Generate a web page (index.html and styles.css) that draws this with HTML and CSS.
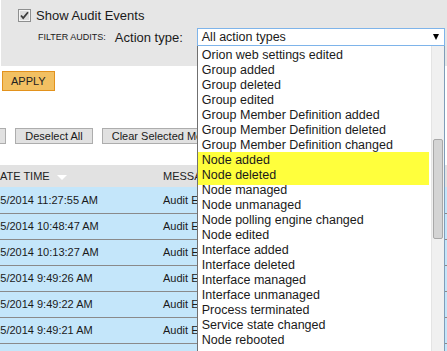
FILE: index.html
```html
<!DOCTYPE html>
<html lang="en">
<head>
    <meta charset="UTF-8">
    <title>Audit Events</title>
    <link rel="stylesheet" href="styles.css">
</head>
<body>

    <!-- Filter panel -->
    <div class="filter-panel">
        <label class="show-audit">
            <span class="check">
                <svg width="13" height="13" viewBox="0 0 13 13">
                    <rect x="0.5" y="0.5" width="12" height="12" fill="#e9e9e9" stroke="#8e8f8f"/>
                    <rect x="1.5" y="1.5" width="10" height="10" fill="#dcdcdc" stroke="#f4f4f4"/>
                    <path d="M3 6.5 L5.2 9 L10 3.2" fill="none" stroke="#3c3c3c" stroke-width="1.8"/>
                </svg>
            </span>
            Show Audit Events
        </label>
        <div class="filter-row">
            <span class="filter-title">FILTER AUDITS:</span>
            <span class="filter-label">Action type:</span>
            <div class="select-wrap">
                <div class="select-box">
                    <span>All action types</span>
                    <span class="arrow"></span>
                </div>
                <!-- open dropdown -->
                <div class="option-list">
                    <div class="options">
                        <div class="option">Orion web settings edited</div>
                        <div class="option">Group added</div>
                        <div class="option">Group deleted</div>
                        <div class="option">Group edited</div>
                        <div class="option">Group Member Definition added</div>
                        <div class="option">Group Member Definition deleted</div>
                        <div class="option">Group Member Definition changed</div>
                        <div class="highlight">
                            <div class="option">Node added</div>
                            <div class="option">Node deleted</div>
                        </div>
                        <div class="option">Node managed</div>
                        <div class="option">Node unmanaged</div>
                        <div class="option">Node polling engine changed</div>
                        <div class="option">Node edited</div>
                        <div class="option">Interface added</div>
                        <div class="option">Interface deleted</div>
                        <div class="option">Interface managed</div>
                        <div class="option">Interface unmanaged</div>
                        <div class="option">Process terminated</div>
                        <div class="option">Service state changed</div>
                        <div class="option">Node rebooted</div>
                    </div>
                    <div class="scrollbar">
                        <div class="thumb"></div>
                    </div>
                </div>
            </div>
        </div>
    </div>

    <div class="apply-row">
        <button class="btn-apply">APPLY</button>
    </div>

    <!-- Grid -->
    <div class="toolbar">
        <button class="btn">Select All</button>
        <button class="btn">Deselect All</button>
        <button class="btn">Clear Selected Messages</button>
    </div>

    <table class="audit-grid">
        <thead>
            <tr>
                <th class="col-date">DATE TIME <span class="sort"></span></th>
                <th class="col-msg">MESSAGE</th>
            </tr>
        </thead>
        <tbody>
            <tr><td class="col-date">3/25/2014 11:27:55 AM</td><td>Audit Events viewed</td></tr>
            <tr><td class="col-date">3/25/2014 10:48:47 AM</td><td>Audit Events viewed</td></tr>
            <tr><td class="col-date">3/25/2014 10:13:27 AM</td><td>Audit Events viewed</td></tr>
            <tr><td class="col-date">3/25/2014 9:49:26 AM</td><td>Audit Events viewed</td></tr>
            <tr><td class="col-date">3/25/2014 9:49:22 AM</td><td>Audit Events viewed</td></tr>
            <tr><td class="col-date">3/25/2014 9:49:21 AM</td><td>Audit Events viewed</td></tr>
            <tr><td class="col-date">3/25/2014 9:49:20 AM</td><td>Audit Events viewed</td></tr>
        </tbody>
    </table>

</body>
</html>
```

FILE: styles.css
```css
* {
    margin: 0;
    padding: 0;
    box-sizing: border-box;
}
html, body {
    width: 100%;
    height: 100%;
    overflow: hidden;
    background: #fff;
    color: #1a1a1a;
    font-family: 'Liberation Sans', Arial, sans-serif;
}

/* FILTER PANEL */
.filter-panel {
    margin-left: 1px;
    height: 66px;
    background: #e6e6e6;
    padding-top: 5px;
}
.show-audit {
    display: flex;
    align-items: center;
    height: 20px;
    padding-left: 17px;
    font-size: 13px;
}
.check {
    display: flex;
    margin-right: 5px;
}
.filter-row {
    display: flex;
    align-items: center;
    margin-top: 3px;
    padding-left: 37px;
    height: 18px;
}
.filter-title {
    font-size: 9px;
    margin-right: 9px;
}
.filter-label {
    font-size: 13px;
    margin-right: 14px;
}

/* select + open list */
.select-wrap {
    position: relative;
    width: 248px;
}
.select-box {
    display: flex;
    justify-content: space-between;
    align-items: center;
    height: 18px;
    padding: 0 5px 0 4px;
    background: #fff;
    border: 1px solid #7eb4ea;
    font-size: 12.5px;
}
.arrow {
    width: 0;
    height: 0;
    border-left: 3.5px solid transparent;
    border-right: 3.5px solid transparent;
    border-top: 6px solid #000;
}
.option-list {
    position: absolute;
    top: 18px;
    left: 0;
    width: 248px;
    height: 320px;
    display: flex;
    background: #fff;
    border-left: 1px solid #707070;
    border-right: 1px solid #7f9db9;
    overflow: hidden;
}
.options {
    flex: 1;
    padding-top: 2px;
    font-size: 12.5px;
}
.option {
    height: 15px;
    line-height: 15px;
    padding-left: 4px;
    white-space: nowrap;
}
.highlight {
    background: #ffff3c;
    margin: -1px 2px -2px 0;
    padding: 1px 0 2px;
}
.scrollbar {
    width: 13px;
    background: #f0f0f0;
    border-left: 1px solid #e4e4e4;
    padding: 93px 1px 0 1px;
}
.thumb {
    height: 100px;
    background: #d4d4d4;
    border: 1px solid #a8a8a8;
    border-radius: 2px;
}

/* APPLY */
.apply-row {
    padding: 5px 0 0 2px;
}
.btn-apply {
    height: 20px;
    padding: 0 8px;
    background: #f2c062;
    border: 1px solid #e3921c;
    font-family: inherit;
    font-size: 11px;
    color: #222;
}

/* GRID */
.toolbar {
    display: flex;
    gap: 9px;
    margin: 37px 0 0 -59px;
}
.btn {
    height: 16px;
    padding: 0 9px;
    background: #e1e1e1;
    border: 1px solid #adadad;
    font-family: inherit;
    font-size: 11px;
    color: #1a1a1a;
    white-space: nowrap;
}
.audit-grid {
    margin: 21px 0 0 -20px;
    width: 700px;
    border-collapse: collapse;
    font-size: 11px;
}
.audit-grid th {
    height: 22px;
    background: #e2e2e2;
    text-align: left;
    font-weight: normal;
    color: #222;
}
.audit-grid th.col-date {
    padding-left: 12px;
    width: 178px;
}
.audit-grid th.col-msg {
    padding-left: 5px;
}
.sort {
    display: inline-block;
    width: 0;
    height: 0;
    margin-left: 4px;
    vertical-align: middle;
    border-left: 5px solid transparent;
    border-right: 5px solid transparent;
    border-top: 5px solid #fff;
}
.audit-grid td {
    height: 26px;
    background: #c4e6fa;
    border-bottom: 1px solid #8a8a8a;
    padding-left: 5px;
    white-space: nowrap;
}
.audit-grid td.col-date {
    padding-left: 5px;
}
```
